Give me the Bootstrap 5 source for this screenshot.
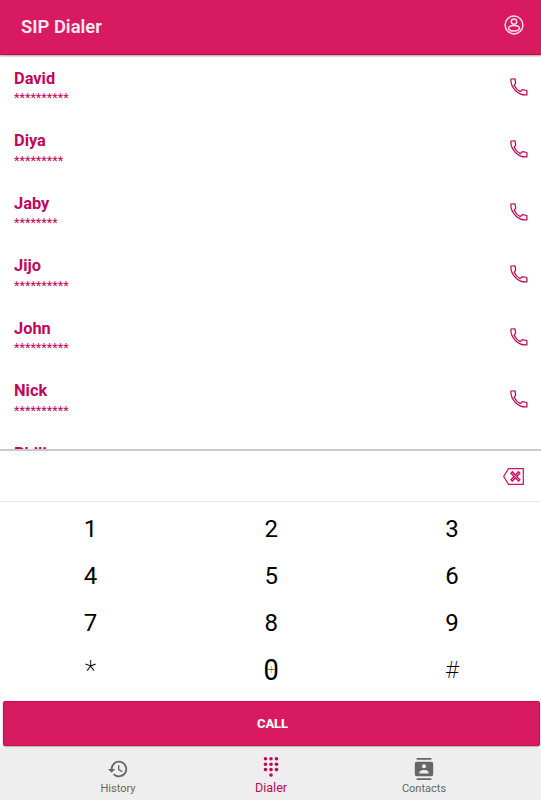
<!DOCTYPE html>
<html lang="en">
<head>
<meta charset="utf-8">
<meta name="viewport" content="width=device-width, initial-scale=1">
<title>SIP Dialer</title>
<link href="https://cdn.jsdelivr.net/npm/bootstrap@5.3.0/dist/css/bootstrap.min.css" rel="stylesheet">
<style>
:root { --pink: #d81b60; --deep: #c2075b; }
body { font-family: Roboto, "Liberation Sans", sans-serif; background: #fff; color: #000; }
svg { display: block; }
.phone-screen { height: 800px; }
.app-header { height: 54.5px; background: var(--pink); border-bottom: 1px solid #b8104f; box-shadow: 0 1px 2px rgba(0,0,0,.4); padding: 0 17px 3px 21px; z-index: 1; }
.app-title { font-size: 18.4px; font-weight: 600; line-height: 24px; color: #fdeaf1; padding-top: 3px; }
.contact-list { height: 394.5px; }
.contact-row { height: 62.5px; padding: 13px 13px 0 14px; border: 0; background: none; color: var(--deep); }
.contact-name { font-size: 16.4px; font-weight: 700; line-height: 21px; }
.contact-number { font-size: 12.7px; line-height: 16px; margin-top: 1.5px; }
.call-icon { margin-top: 10px; }
.number-entry { height: 53px; border-top: 2px solid #cbc9ca; border-bottom: 1px solid #e8e8e8; padding-right: 17px; }
.keypad { height: 199px; padding: 4px 0 0 0; margin-right: -1.5px; }
.dial-key { height: 47px; font-size: 24px; line-height: 47px; }
.thin-key { font-weight: 200; }
.star-key { font-size: 27px; line-height: 49px; }
.zero-key { font-size: 29px; }
.zero-digit { display: inline-block; transform: scaleX(.94); }
.zero-plus { font-size: 14px; font-weight: 100; line-height: 1; padding-bottom: 4px; }
.call-button { height: 44.5px; margin: 0 1px 0 3px; background: var(--pink); color: #fff; font-size: 13px; font-weight: 800; letter-spacing: -.1px; border: 1px solid #c90d56; border-radius: 2px; box-shadow: 0 1px 2px rgba(0,0,0,.35); z-index: 1; padding: 0 0 0 2px; }
.bottom-bar { background: #eee; margin-top: 2.5px; padding-left: 1px; }
.tab-item { width: 153px; color: #676767; font-size: 11px; line-height: 14px; padding-top: 9.5px; }
.tab-item.selected { color: var(--deep); font-size: 12.6px; padding-top: 8px; }
.tab-label { margin-top: 2.5px; }
.selected .tab-label { margin-top: 4px; }
</style>
<script src="https://cdn.jsdelivr.net/npm/bootstrap@5.3.0/dist/js/bootstrap.bundle.min.js"></script>
</head>
<body>
<svg width="0" height="0" class="position-absolute" aria-hidden="true">
  <symbol id="handset" viewBox="0 0 18 18"><path d="M.9 1 5 .9 5.7 5.2 4.2 7.2C5.4 10 7.5 12.3 10.2 13.6L12.3 11.7 16.9 12.5V16.9C8.3 17.8.3 9.5.9 1Z" fill="none" stroke="currentColor" stroke-width="1.25" stroke-linejoin="round"/></symbol>
</svg>
<div class="phone-screen d-flex flex-column overflow-hidden">
  <header class="app-header d-flex flex-shrink-0 align-items-center justify-content-between position-relative">
    <h1 class="app-title m-0">SIP Dialer</h1>
    <svg width="20" height="20" viewBox="0 0 20 20" fill="none" stroke="#fbdde8" stroke-width="1.5"><circle cx="10" cy="10" r="8.9"/><circle cx="10" cy="6.6" r="2.7"/><ellipse cx="10" cy="13.3" rx="5.3" ry="2.7"/></svg>
  </header>
  <main class="contact-list list-group list-group-flush flex-shrink-0 overflow-hidden">
    <div class="contact-row d-flex flex-shrink-0 justify-content-between"><div><div class="contact-name">David</div><div class="contact-number">**********</div></div><svg class="call-icon" width="18" height="18"><use href="#handset"/></svg></div>
    <div class="contact-row d-flex flex-shrink-0 justify-content-between"><div><div class="contact-name">Diya</div><div class="contact-number">*********</div></div><svg class="call-icon" width="18" height="18"><use href="#handset"/></svg></div>
    <div class="contact-row d-flex flex-shrink-0 justify-content-between"><div><div class="contact-name">Jaby</div><div class="contact-number">********</div></div><svg class="call-icon" width="18" height="18"><use href="#handset"/></svg></div>
    <div class="contact-row d-flex flex-shrink-0 justify-content-between"><div><div class="contact-name">Jijo</div><div class="contact-number">**********</div></div><svg class="call-icon" width="18" height="18"><use href="#handset"/></svg></div>
    <div class="contact-row d-flex flex-shrink-0 justify-content-between"><div><div class="contact-name">John</div><div class="contact-number">**********</div></div><svg class="call-icon" width="18" height="18"><use href="#handset"/></svg></div>
    <div class="contact-row d-flex flex-shrink-0 justify-content-between"><div><div class="contact-name">Nick</div><div class="contact-number">**********</div></div><svg class="call-icon" width="18" height="18"><use href="#handset"/></svg></div>
    <div class="contact-row d-flex flex-shrink-0 justify-content-between"><div class="contact-name">Phili</div></div>
  </main>
  <div class="number-entry d-flex flex-shrink-0 align-items-center justify-content-end">
    <svg width="21" height="17" viewBox="0 0 21 17" fill="none" stroke="#cf1260"><path d="M5.5.7H20.3V16.3H5.5L.7 8.5Z" stroke-width="1.2"/><path d="m8.2 4 8.4 8.8m0-8.8-8.4 8.8" stroke-width="3.3"/><path d="m9 4.8 6.8 7.2m0-7.2-6.8 7.2" stroke="#ee8db3" stroke-width="1"/></svg>
  </div>
  <div class="keypad row g-0 text-center flex-shrink-0 align-content-start">
    <div class="dial-key col-4">1</div><div class="dial-key col-4">2</div><div class="dial-key col-4">3</div>
    <div class="dial-key col-4">4</div><div class="dial-key col-4">5</div><div class="dial-key col-4">6</div>
    <div class="dial-key col-4">7</div><div class="dial-key col-4">8</div><div class="dial-key col-4">9</div>
    <div class="dial-key thin-key star-key col-4">*</div>
    <div class="dial-key zero-key col-4 position-relative"><span class="zero-digit">0</span><span class="zero-plus position-absolute top-50 start-50 translate-middle">+</span></div>
    <div class="dial-key thin-key col-4">#</div>
  </div>
  <button class="call-button btn flex-shrink-0 position-relative">CALL</button>
  <nav class="bottom-bar d-flex justify-content-center flex-grow-1">
    <div class="tab-item d-flex flex-column align-items-center">
      <svg width="22" height="22" viewBox="0 0 24 24" fill="currentColor"><path d="M13 3a9 9 0 0 0-9 9H1l3.9 3.9.1.1L9 12H6a7 7 0 1 1 2.06 4.94l-1.42 1.42A9 9 0 1 0 13 3Zm-1 5v5l4.3 2.5.7-1.2-3.5-2.1V8Z"/></svg>
      <div class="tab-label">History</div>
    </div>
    <div class="tab-item selected d-flex flex-column align-items-center">
      <svg width="16" height="21" viewBox="0 0 16 21" fill="currentColor"><circle cx="2.5" cy="2.8" r="1.8"/><circle cx="8" cy="2.8" r="1.8"/><circle cx="13.5" cy="2.8" r="1.8"/><circle cx="2.5" cy="8.2" r="1.8"/><circle cx="8" cy="8.2" r="1.8"/><circle cx="13.5" cy="8.2" r="1.8"/><circle cx="2.5" cy="13.6" r="1.8"/><circle cx="8" cy="13.6" r="1.8"/><circle cx="13.5" cy="13.6" r="1.8"/><circle cx="8" cy="19" r="1.8"/></svg>
      <div class="tab-label">Dialer</div>
    </div>
    <div class="tab-item d-flex flex-column align-items-center">
      <svg width="22" height="22" viewBox="0 0 24 24" fill="currentColor"><path d="M20 0H4v2h16V0ZM4 24h16v-2H4v2ZM20 4H4a2 2 0 0 0-2 2v12a2 2 0 0 0 2 2h16a2 2 0 0 0 2-2V6a2 2 0 0 0-2-2Zm-8 2.75a2.25 2.25 0 1 1 0 4.5 2.25 2.25 0 0 1 0-4.5ZM17 17H7v-1.5c0-1.67 3.33-2.5 5-2.5s5 .83 5 2.5V17Z"/></svg>
      <div class="tab-label">Contacts</div>
    </div>
  </nav>
</div>
</body>
</html>
